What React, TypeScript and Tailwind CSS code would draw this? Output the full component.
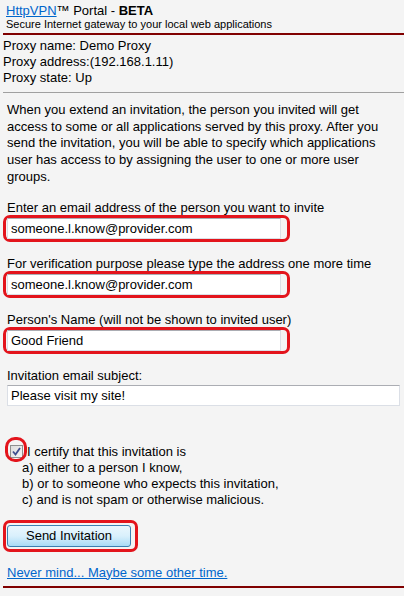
import React, { useState } from 'react';

const RED = 'border-[#e3141c]';

const Field = ({ value, wide }: { value: string; wide?: boolean }) => (
  <input
    type="text"
    defaultValue={value}
    className={`${wide ? 'w-[393px]' : 'w-[274px]'} h-[21px] bg-white border border-[#dbdfe6] border-t-[#abadb3] px-[3px] text-[13px] text-black outline-none`}
  />
);

const Marked = ({ children }: { children: React.ReactNode }) => (
  <div className={`ml-[-4px] w-fit border-[3px] ${RED} rounded-[7px] pl-px pr-[6px]`}>{children}</div>
);

const App = () => {
  const [checked, setChecked] = useState(true);

  return (
    <div
      className="w-[404px] h-[596px] overflow-hidden bg-[#f4f4f4] text-black text-[13px]"
      style={{ fontFamily: '"Liberation Sans", Arial, sans-serif' }}
    >
      {/* Header */}
      <div className="pl-[6px] pt-[3px]">
        <div className="leading-[15px]">
          <a href="#" className="text-[#0066cc] underline">HttpVPN</a>™ Portal - <b>BETA</b>
        </div>
        <div className="text-[11px] leading-[12px]">Secure Internet gateway to your local web applications</div>
      </div>
      <div className="ml-[3px] mt-[3px] h-[2px] bg-[#800000]" />

      {/* Proxy info */}
      <div className="pl-[3px] mt-[3px] leading-[16px]">
        <div>Proxy name: Demo Proxy</div>
        <div>Proxy address:(192.168.1.11)</div>
        <div>Proxy state: Up</div>
      </div>
      <div className="ml-[3px] mt-[6px] h-px bg-[#a0a0a0]" />

      {/* Form */}
      <div className="pl-[7px]">
        <p className="mt-[9px] leading-[16.7px] pr-[20px]">
          When you extend an invitation, the person you invited will get access to some or all applications served
          by this proxy. After you send the invitation, you will be able to specify which applications user has
          access to by assigning the user to one or more user groups.
        </p>

        <div className="mt-[15px] leading-[14px]">Enter an email address of the person you want to invite</div>
        <Marked>
          <Field value="someone.l.know@provider.com" />
        </Marked>

        <div className="mt-[15px] leading-[14px]">For verification purpose please type the address one more time</div>
        <Marked>
          <Field value="someone.l.know@provider.com" />
        </Marked>

        <div className="mt-[15px] leading-[14px]">Person's Name (will not be shown to invited user)</div>
        <Marked>
          <Field value="Good Friend" />
        </Marked>

        <div className="mt-[15px] leading-[14px]">Invitation email subject:</div>
        <div className="mt-[2px]">
          <Field value="Please visit my site!" wide />
        </div>

        {/* Certification */}
        <div className="mt-[38px] leading-[16px]">
          <div className="flex items-center h-[16px]">
            <button
              onClick={() => setChecked(!checked)}
              className="relative ml-[3px] w-[13px] h-[13px] border border-[#8e8f8f] bg-gradient-to-br from-[#dcdcdc] to-[#f6f6f6] flex items-center justify-center"
            >
              {checked && (
                <svg width="9" height="9" viewBox="0 0 9 9">
                  <path d="M1 4.5 L3.5 7.5 L8 1" fill="none" stroke="#3f4f8f" strokeWidth="1.8" />
                </svg>
              )}
              <span className={`absolute left-[-6px] top-[-9px] w-[22px] h-[25px] border-[3px] ${RED} rounded-[10px]`} />
            </button>
            <span className="ml-[4px]">I certify that this invitation is</span>
          </div>
          <div className="pl-[15px]">
            <div>a) either to a person I know,</div>
            <div>b) or to someone who expects this invitation,</div>
            <div>c) and is not spam or otherwise malicious.</div>
          </div>
        </div>

        <div className={`mt-[12px] ml-[-4px] w-fit border-[3px] ${RED} rounded-[7px] pt-[2px] pb-[2px] pl-px pr-[4px]`}>
          <button className="w-[124px] h-[22px] rounded-[3px] border border-[#3c7fb1] bg-gradient-to-b from-[#eaf6fd] via-[#d9f0fc] to-[#a9dbf6] text-[13px] text-black">
            Send Invitation
          </button>
        </div>

        <div className="mt-[13px] leading-[16px] pl-[-1px]">
          <a href="#" className="text-[#0066cc] underline">Never mind... Maybe some other time.</a>
        </div>
      </div>
      <div className="ml-[3px] mt-[5px] h-[2px] bg-[#800000]" />
    </div>
  );
};

export default App;
